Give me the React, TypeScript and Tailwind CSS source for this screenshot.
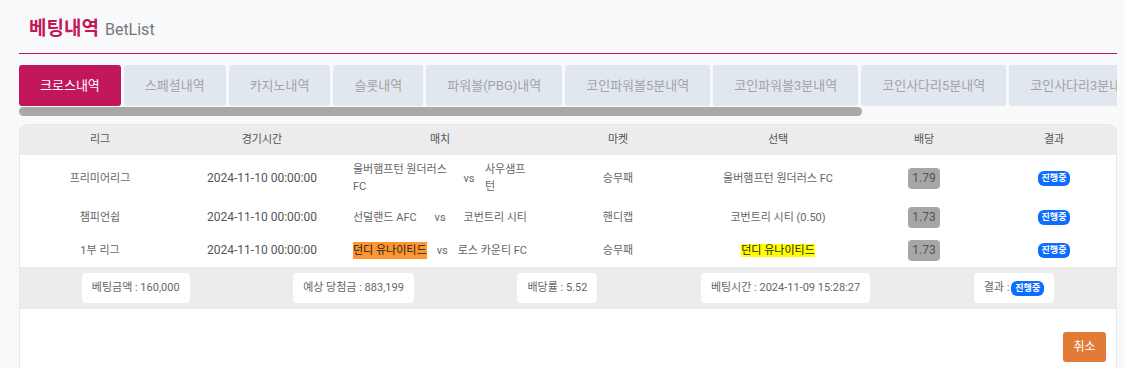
const tabs = [
  "크로스내역",
  "스페셜내역",
  "카지노내역",
  "슬롯내역",
  "파워볼(PBG)내역",
  "코인파워볼5분내역",
  "코인파워볼3분내역",
  "코인사다리5분내역",
  "코인사다리3분내역",
];

type Bet = {
  league: string;
  time: string;
  home: string;
  away: string;
  homeHi?: boolean;
  narrow?: boolean;
  market: string;
  pick: string;
  pickHi?: boolean;
  odds: string;
};

const bets: Bet[] = [
  {
    league: "프리미어리그",
    time: "2024-11-10 00:00:00",
    home: "울버햄프턴 원더러스 FC",
    away: "사우샘프턴",
    narrow: true,
    market: "승무패",
    pick: "울버햄프턴 원더러스 FC",
    odds: "1.79",
  },
  {
    league: "챔피언쉽",
    time: "2024-11-10 00:00:00",
    home: "선덜랜드 AFC",
    away: "코번트리 시티",
    market: "핸디캡",
    pick: "코번트리 시티 (0.50)",
    odds: "1.73",
  },
  {
    league: "1부 리그",
    time: "2024-11-10 00:00:00",
    home: "던디 유나이티드",
    away: "로스 카운티 FC",
    homeHi: true,
    market: "승무패",
    pick: "던디 유나이티드",
    pickHi: true,
    odds: "1.73",
  },
];

const cols = "grid grid-cols-[160px_164px_192px_164px_156px_136px_1fr]";

function Badge() {
  return (
    <span className="inline-block rounded-[6px] bg-[#0d6efd] px-[4px] py-px text-[9px] font-bold leading-[13px] text-white">
      진행중
    </span>
  );
}

export default function App() {
  return (
    <div className="min-h-[368px] bg-[#f8f9fa] pt-[16px] pl-[19px] pr-[7px] font-[Roboto,'Noto_Sans_CJK_KR',sans-serif] text-[#666]">
      {/* title */}
      <div className="flex items-baseline border-b border-[#c2185b] pb-[10px] pl-[10px] leading-[26px]">
        <h1 className="text-[19px] font-bold text-[#c2185b]">베팅내역</h1>
        <span className="ml-[6px] text-[16px] text-[#777]">BetList</span>
      </div>

      {/* tabs */}
      <div className="mt-[11px] flex gap-[3px] overflow-hidden">
        {tabs.map((t, i) => (
          <div
            key={t}
            className={
              i === 0
                ? "flex h-[41px] shrink-0 items-center whitespace-nowrap rounded-[3px] bg-[#c2185b] px-[21px] text-[13px] text-white"
                : "flex h-[41px] shrink-0 items-center whitespace-nowrap rounded-[3px] bg-[#e1e7ef] px-[21px] text-[13px] text-[#a3a3a3]"
            }
          >
            {t}
          </div>
        ))}
      </div>
      <div className="mt-px h-[9px] w-[843px] rounded-full bg-[#a8a8a8]" />

      {/* bet card */}
      <div className="mt-[8px] overflow-hidden rounded-t-[8px] border border-[#e3e6ea] bg-white">
        <div className={`${cols} h-[30px] items-center bg-[#ececec] text-center text-[11px] text-[#555]`}>
          <div>리그</div>
          <div>경기시간</div>
          <div>매치</div>
          <div>마켓</div>
          <div>선택</div>
          <div>배당</div>
          <div>결과</div>
        </div>

        {bets.map((b, i) => (
          <div key={i} className={`${cols} items-center py-[6px] text-center text-[11px] leading-[17px]`}>
            <div>{b.league}</div>
            <div className="text-[12px] text-[#555]">{b.time}</div>
            <div className="flex items-center justify-between px-[9px] text-left">
              <span className={b.narrow ? "w-[100px]" : b.homeHi ? "bg-[#fd9530] text-[#222]" : ""}>{b.home}</span>
              <span className="shrink-0">vs</span>
              <span className={b.narrow ? "w-[42px]" : ""}>{b.away}</span>
            </div>
            <div>{b.market}</div>
            <div>
              <span className={b.pickHi ? "bg-[#ffff00] text-[#222]" : ""}>{b.pick}</span>
            </div>
            <div className="flex justify-center">
              <span className="rounded-[4px] bg-[#a6a6a6] px-[4px] py-[2px] text-[12px] text-[#555]">{b.odds}</span>
            </div>
            <div className="flex justify-center">
              <Badge />
            </div>
          </div>
        ))}

        {/* summary */}
        <div className="flex items-center justify-around bg-[#ececec] px-[10px] py-[6px] text-[11px]">
          <div className="flex h-[30px] items-center rounded-[4px] bg-white px-[10px]">베팅금액 : 160,000</div>
          <div className="flex h-[30px] items-center rounded-[4px] bg-white px-[10px]">예상 당첨금 : 883,199</div>
          <div className="flex h-[30px] items-center rounded-[4px] bg-white px-[10px]">배당률 : 5.52</div>
          <div className="flex h-[30px] items-center rounded-[4px] bg-white px-[10px]">베팅시간 : 2024-11-09 15:28:27</div>
          <div className="flex h-[30px] items-center gap-[2px] rounded-[4px] bg-white px-[10px]">
            결과 : <Badge />
          </div>
        </div>

        <div className="flex justify-end pb-[20px] pr-[10px] pt-[23px]">
          <button className="h-[30px] w-[43px] rounded-[3px] bg-[#e27b36] text-[12px] text-white">취소</button>
        </div>
      </div>
    </div>
  );
}
